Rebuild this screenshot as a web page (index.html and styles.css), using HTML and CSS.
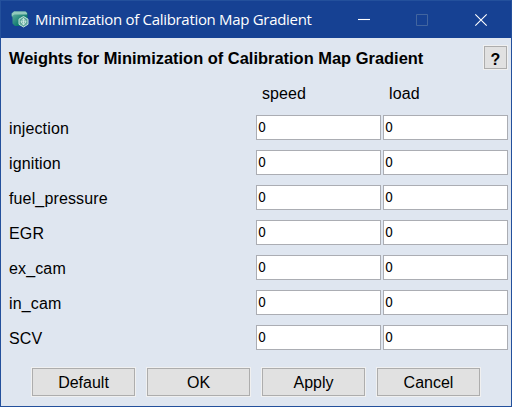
FILE: index.html
```html
<!DOCTYPE html>
<html lang="en">
<head>
<meta charset="utf-8">
<title>Minimization of Calibration Map Gradient</title>
<link rel="stylesheet" href="styles.css">
</head>
<body>
<main class="window">
  <header class="titlebar">
    <svg class="app-icon" width="18" height="17" viewBox="0 0 18 17">
      <defs>
        <linearGradient id="body" x1="0" y1="0" x2="1" y2="1"><stop offset="0" stop-color="#6fb5a6"/><stop offset=".7" stop-color="#08776b"/></linearGradient>
      </defs>
      <path d="M3 .5h11.500l2 1.500v11l-2.500 2H4L1.500 12.500V6.500L.5 5V2.500z" fill="url(#body)"/>
      <path d="M3 .5h11.500l1.500 1.500v1.500H3.500L1 5V2.500z" fill="#93c9bc"/>
      <path d="M12.500 5.500l4.500 2.700v5.100L12.500 16 8 13.300V8.200z" fill="#5fa79b" stroke="#c6e6de"/>
      <path d="M12.500 7.500l2.500 3.300-2.500 3.200-2.500-3.200zM12.500 7.500V14M10 10.800h5" fill="none" stroke="#d9f1e9" stroke-width=".8"/>
    </svg>
    <span class="caption">Minimization of Calibration Map Gradient</span>
    <svg class="controls" width="130" height="14" viewBox="0 0 130 14" fill="none">
      <path class="on" d="M0 6.500h12"/>
      <path class="off" d="M58.500 1.500h11v11h-11z"/>
      <path class="on" d="M117.300 1.300l11.400 11.400M128.700 1.300l-11.400 11.400"/>
    </svg>
  </header>
  <div class="heading">
    <h1>Weights for Minimization of Calibration Map Gradient</h1>
    <button class="btn help">?</button>
  </div>
  <form class="weights">
    <span></span><span class="col">speed</span><span class="col">load</span>
    <label>injection</label><input value="0"><input value="0">
    <label>ignition</label><input value="0"><input value="0">
    <label>fuel_pressure</label><input value="0"><input value="0">
    <label>EGR</label><input value="0"><input value="0">
    <label>ex_cam</label><input value="0"><input value="0">
    <label>in_cam</label><input value="0"><input value="0">
    <label>SCV</label><input value="0"><input value="0">
  </form>
  <footer class="actions">
    <button class="btn">Default</button>
    <button class="btn">OK</button>
    <button class="btn">Apply</button>
    <button class="btn">Cancel</button>
  </footer>
</main>
</body>
</html>
```
FILE: styles.css
```css
* { box-sizing: border-box; }
body { margin: 0; font: 16px/20px "Liberation Sans", Arial, sans-serif; color: #000; }
.window {
  width: 512px; height: 407px;
  background: #dfe6f0;
  border: 1px solid #23509c;
  display: flex; flex-direction: column;
}
.titlebar {
  height: 37px; flex: none;
  background: #164193; color: #fff;
  display: flex; align-items: center;
  padding: 0 23px 0 10px;
}
.app-icon { flex: none; }
.caption {
  margin-left: 6px; padding-bottom: 1px;
  font: 15px/20px "Open Sans", "Noto Sans", sans-serif;
  letter-spacing: -0.31px; white-space: nowrap;
}
.controls { margin-left: auto; flex: none; }
.on { stroke: #fff; stroke-width: 1.1; }
.off { stroke: #42659f; }
.heading {
  display: flex; justify-content: space-between;
  padding: 8px 4px 0 8px; height: 39px; flex: none;
}
h1 { margin: 2px 0 0; font-size: 16.44px; line-height: 20px; white-space: nowrap; }
.weights {
  display: grid;
  grid-template-columns: 245px 125px 125px;
  grid-template-rows: 28px repeat(7, 25px);
  column-gap: 2px; row-gap: 10px;
  margin-left: 8px;
}
.col { padding: 7px 0 0 6px; letter-spacing: 0.1px; }
label { padding-top: 4px; letter-spacing: 0.14px; }
input {
  width: 125px; height: 25px; margin: 0;
  border: 1px solid #abadb3; border-radius: 0; background: #fff;
  padding: 0 0 1px 1px;
  font: 14px "DejaVu Sans Condensed", "Arial Narrow", sans-serif; color: #000;
}
.btn {
  width: 103px; height: 28px; padding: 2px 0 0;
  border: 1px solid #adadad; border-radius: 0; background: #e1e1e1;
  box-shadow: 0 0 0 1px #f0f0f0;
  font: 16px/20px "Liberation Sans", Arial, sans-serif; color: #000;
}
.help { width: 23px; height: 23px; padding-top: 3px; font-weight: bold; }
.actions { display: flex; gap: 12px; margin: 18px 0 0 31px; }
```
